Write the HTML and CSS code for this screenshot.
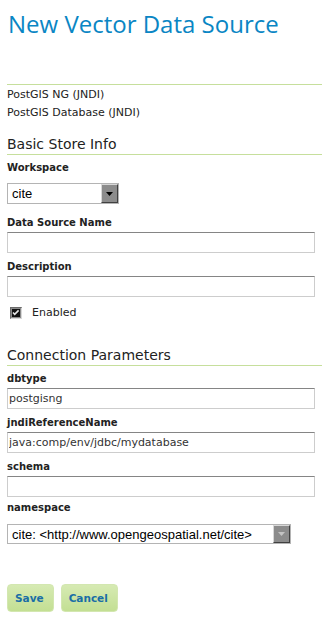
FILE: index.html
```html
<!DOCTYPE html>
<html lang="en">
<head>
<meta charset="utf-8">
<title>New Vector Data Source</title>
<link rel="stylesheet" href="styles.css">
</head>
<body>
<h1 class="page-title">New Vector Data Source</h1>
<ul class="store-types">
  <li>PostGIS NG (JNDI)</li>
  <li>PostGIS Database (JNDI)</li>
</ul>

<h2 class="section-title section-basic">Basic Store Info</h2>
<div class="field field-first">
  <label class="field-label">Workspace</label>
  <div class="select select-workspace">
    <span class="select-value">cite</span>
    <span class="select-button"><svg width="7" height="4" viewBox="0 0 7 4"><path d="M0 0H7L3.5 4Z" fill="#000"/></svg></span>
  </div>
</div>
<div class="field field-after-select">
  <label class="field-label">Data Source Name</label>
  <input class="text-input" type="text" value="">
</div>
<div class="field">
  <label class="field-label">Description</label>
  <input class="text-input" type="text" value="">
</div>
<div class="check-row">
  <span class="checkbox"><svg width="12" height="12" viewBox="0 0 12 12"><rect x="0" y="0" width="12" height="12" fill="#8a8a8a"/><rect x="0" y="0" width="11" height="1" fill="#6a6a6a"/><rect x="0" y="0" width="1" height="11" fill="#6a6a6a"/><rect x="1" y="11" width="11" height="1" fill="#d8d8d8"/><rect x="11" y="1" width="1" height="11" fill="#d8d8d8"/><rect x="2" y="2" width="8" height="8" fill="#111"/><path d="M3 5.5L4.7 7.3L8.6 3.4" stroke="#e6e6e6" stroke-width="1.6" fill="none"/></svg></span>
  <span class="check-label">Enabled</span>
</div>

<h2 class="section-title section-conn">Connection Parameters</h2>
<div class="field field-first">
  <label class="field-label">dbtype</label>
  <input class="text-input" type="text" value="postgisng">
</div>
<div class="field">
  <label class="field-label">jndiReferenceName</label>
  <input class="text-input" type="text" value="java:comp/env/jdbc/mydatabase">
</div>
<div class="field">
  <label class="field-label">schema</label>
  <input class="text-input" type="text" value="">
</div>
<div class="field field-namespace">
  <label class="field-label">namespace</label>
  <div class="select select-namespace">
    <span class="select-value">cite: &lt;http://www.opengeospatial.net/cite&gt;</span>
    <span class="select-button select-button-dim"><svg width="7" height="4" viewBox="0 0 7 4"><path d="M0 0H7L3.5 4Z" fill="#c4c4c4"/></svg></span>
  </div>
</div>

<div class="actions">
  <button class="btn btn-save" type="button">Save</button>
  <button class="btn btn-cancel" type="button">Cancel</button>
</div>
</body>
</html>
```

FILE: styles.css
```css
html, body {
  margin: 0;
  background: #ffffff;
}

body {
  padding: 8px 0 0 7px;
  font-family: "DejaVu Sans", Verdana, sans-serif;
  font-size: 11px;
  color: #222;
}

.page-title {
  margin: 0;
  font-family: "Open Sans", "DejaVu Sans", sans-serif;
  font-weight: normal;
  font-size: 24px;
  line-height: 32px;
  color: #0a86c4;
  padding-left: 1px;
}

.store-types {
  list-style: none;
  margin: 44px 0 0 0;
  padding: 1px 0 0 0;
  border-top: 1px solid #c6df9c;
}

.store-types li {
  line-height: 18px;
  color: #222;
}

.section-title {
  margin: 0;
  font-weight: normal;
  font-size: 14px;
  line-height: 18px;
  color: #222;
  padding-bottom: 1px;
  border-bottom: 1px solid #c6df9c;
}

.section-basic {
  margin-top: 13px;
}

.section-conn {
  margin-top: 27px;
}

.field {
  display: flex;
  flex-direction: column;
  align-items: flex-start;
  margin-top: 7px;
}

.field-first {
  margin-top: 6px;
}

.field-after-select {
  margin-top: 12px;
}

.field-namespace {
  margin-top: 4px;
}

.field-label {
  font-weight: bold;
  font-size: 10px;
  line-height: 14px;
  color: #222;
}

.text-input {
  box-sizing: border-box;
  width: 308px;
  height: 21px;
  margin: 2px 0 0 0;
  padding: 0 0 0 1px;
  border: 1px solid #cdcdcd;
  border-top-color: #858585;
  border-radius: 0;
  font-family: "DejaVu Sans", Verdana, sans-serif;
  font-size: 11px;
  color: #333;
  background: #fff;
  outline: none;
}

.select {
  box-sizing: border-box;
  display: flex;
  align-items: stretch;
  border: 1px solid #b4b4b4;
  background: #fff;
  font-family: "Liberation Sans", Arial, sans-serif;
  font-size: 13px;
  color: #000;
}

.select-workspace {
  width: 112px;
  height: 21px;
  margin-top: 8px;
}

.select-namespace {
  width: 284px;
  height: 20px;
  margin-top: 9px;
}

.select-value {
  flex: 1;
  display: flex;
  align-items: center;
  padding-left: 4px;
  white-space: nowrap;
  overflow: hidden;
}

.select-button {
  box-sizing: border-box;
  width: 17px;
  display: flex;
  align-items: center;
  justify-content: center;
  background: #8c8c8c;
  border-top: 1px solid #d8d8d8;
  border-left: 1px solid #d8d8d8;
  border-right: 1px solid #404040;
  border-bottom: 1px solid #404040;
}

.check-row {
  display: flex;
  align-items: center;
  margin-top: 10px;
  padding-left: 3px;
  height: 12px;
}

.checkbox {
  display: flex;
  width: 12px;
  height: 12px;
}

.check-label {
  margin-left: 10px;
  line-height: 12px;
  font-size: 11px;
  color: #222;
}

.actions {
  display: flex;
  gap: 7px;
  margin-top: 40px;
}

.btn {
  box-sizing: border-box;
  height: 28px;
  padding: 0 9px 1px 7px;
  border: 1px solid #d3e7b0;
  border-radius: 4px;
  background: linear-gradient(#d6eab3, #c3df93);
  font-family: "DejaVu Sans", Verdana, sans-serif;
  font-weight: bold;
  font-size: 10.5px;
  color: #1a6ea6;
  cursor: pointer;
}
```
